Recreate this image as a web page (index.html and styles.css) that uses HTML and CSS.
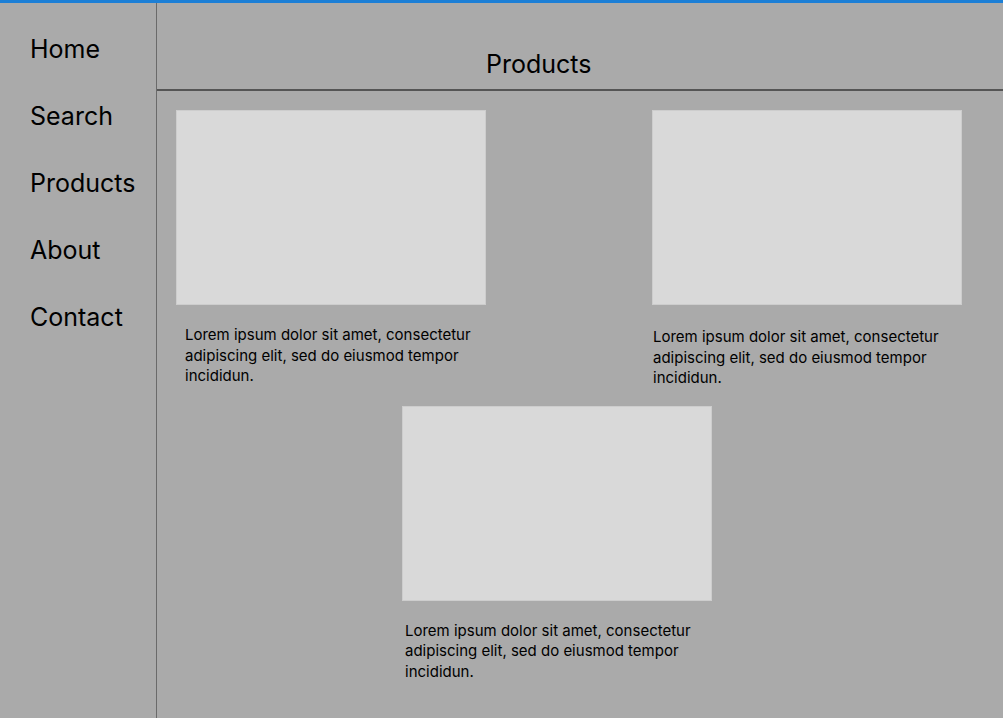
FILE: index.html
```html
<!DOCTYPE html>
<html>
<head>
<meta charset="utf-8">
<link rel="stylesheet" href="styles.css">
</head>
<body>
<div class="topbar"></div>
<div class="layout">
  <nav class="sidebar">
    <a class="nav-link">Home</a>
    <a class="nav-link">Search</a>
    <a class="nav-link">Products</a>
    <a class="nav-link">About</a>
    <a class="nav-link">Contact</a>
  </nav>
  <main class="main">
    <header class="header"><h1 class="title">Products</h1></header>
    <section class="grid">
      <div class="card card-a">
        <div class="thumb"></div>
        <p class="desc">Lorem ipsum dolor sit amet, consectetur adipiscing elit, sed do eiusmod tempor incididun.</p>
      </div>
      <div class="card card-b">
        <div class="thumb"></div>
        <p class="desc">Lorem ipsum dolor sit amet, consectetur adipiscing elit, sed do eiusmod tempor incididun.</p>
      </div>
      <div class="card card-c">
        <div class="thumb"></div>
        <p class="desc">Lorem ipsum dolor sit amet, consectetur adipiscing elit, sed do eiusmod tempor incididun.</p>
      </div>
    </section>
  </main>
</div>
</body>
</html>
```
FILE: styles.css
```css
html, body {
  margin: 0;
  padding: 0;
  height: 100%;
}
body {
  background: #aaaaaa;
  font-family: Inter, "Liberation Sans", sans-serif;
  color: #000;
  overflow: hidden;
}
.topbar {
  height: 3px;
  background: #1c7fd6;
}
.layout {
  display: flex;
  height: 715px;
}
.sidebar {
  width: 157px;
  border-right: 1px solid #6a6a6a;
  display: flex;
  flex-direction: column;
  padding: 31px 0 0 30px;
  box-sizing: border-box;
  gap: 36px;
}
.nav-link {
  font-size: 25px;
  line-height: 31px;
  color: #000;
  text-decoration: none;
}
.main {
  flex: 1;
}
.header {
  height: 88px;
  border-bottom: 2px solid #555555;
  box-sizing: border-box;
  display: flex;
  align-items: flex-end;
  padding-left: 329px;
}
.title {
  margin: 0 0 9px 0;
  font-size: 25px;
  line-height: 31px;
  font-weight: 400;
}
.grid {
  display: grid;
  grid-template-columns: 310px 310px;
  justify-content: space-between;
  padding: 19px 41px 0 19px;
  row-gap: 17px;
}
.thumb {
  width: 310px;
  height: 195px;
  background: #d9d9d9;
  border: 1px solid #cdcdcd;
  box-sizing: border-box;
}
.desc {
  margin: 20px 0 0 0;
  font-size: 15px;
  line-height: 20.5px;
  width: 300px;
}
.card-a .desc {
  padding-left: 9px;
}
.card-b .desc {
  margin-top: 22px;
  padding-left: 1px;
}
.card-c {
  grid-column: 1 / -1;
  margin-left: 226px;
}
.card-c .desc {
  padding-left: 3px;
}
```
